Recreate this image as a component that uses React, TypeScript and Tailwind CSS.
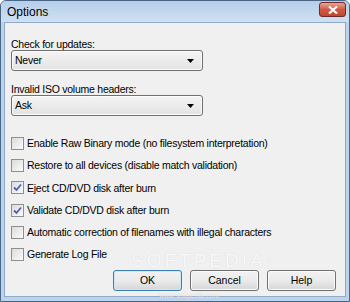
import React from "react";

const font = { fontFamily: '"Liberation Sans", Arial, sans-serif' };

function Select({ value }: { value: string }) {
  return (
    <div className="h-[21px] w-[192px] rounded-[3px] border border-[#707070] bg-gradient-to-b from-[#f4f4f4] to-[#e3e3e3] flex items-center pl-[3px] pr-[8px] text-[10.5px] tracking-[-0.25px] text-black shadow-[inset_0_0_0_1px_#fcfcfc]">
      <span className="flex-1">{value}</span>
      <svg width="7" height="4" viewBox="0 0 7 4">
        <path d="M0 0 H7 L3.5 4 Z" fill="#000" />
      </svg>
    </div>
  );
}

function Check({ label, checked }: { label: string; checked?: boolean }) {
  return (
    <div className="flex items-center h-[13px]">
      <div className="w-[13px] h-[13px] border border-[#8f8f8f] bg-gradient-to-br from-[#dcdcdc] to-[#fbfbfb] flex items-center justify-center shrink-0">
        {checked && (
          <svg width="9" height="9" viewBox="0 0 9 9">
            <path d="M1 4.5 L3.5 7 L8 1.5" stroke="#4a5fb8" strokeWidth="1.8" fill="none" />
          </svg>
        )}
      </div>
      <span className="ml-[3px] text-[10.5px] tracking-[-0.25px] text-black leading-none">{label}</span>
    </div>
  );
}

function Btn({ label, def }: { label: string; def?: boolean }) {
  return (
    <div
      className={`w-[69px] h-[21px] rounded-[3px] border flex items-center justify-center text-[10.5px] text-black bg-gradient-to-b from-[#f2f2f2] via-[#ebebeb] to-[#d6d6d6] ${
        def ? "border-[#3c7fb1] shadow-[inset_0_0_0_1px_#cbe8f6]" : "border-[#707070] shadow-[inset_0_0_0_1px_#fbfbfb]"
      }`}
    >
      {label}
    </div>
  );
}

export default function App() {
  return (
    <div style={font} className="relative w-[350px] h-[302px] bg-[#bcd3ec] border border-[#4a6686] rounded-t-[6px] flex flex-col overflow-hidden">
      <div className="h-[21px] shrink-0 bg-gradient-to-b from-[#b7cfea] to-[#cfe0f3] flex items-center pl-[6px] pr-[3px]">
        <span className="flex-1 text-[12px] text-black">Options</span>
        <div className="w-[27px] h-[15px] mt-[-4px] rounded-[3px] border border-[#6d2a2a] bg-gradient-to-b from-[#e8a593] via-[#cf5a44] to-[#c24530] flex items-center justify-center">
          <svg width="10" height="8" viewBox="0 0 10 8">
            <path d="M1 0.5 L9 7.5 M9 0.5 L1 7.5" stroke="#fff" strokeWidth="2.2" />
          </svg>
        </div>
      </div>
      <div className="flex-1 mx-[3px] mb-[4px] bg-[#f0f0f0] border border-[#8fa9c8] flex flex-col px-[6px] pt-[15px]">
        <div className="text-[10.5px] tracking-[-0.25px] text-black leading-[12px]">Check for updates:</div>
        <Select value="Never" />
        <div className="mt-[12px] text-[10.5px] tracking-[-0.25px] text-black leading-[12px]">Invalid ISO volume headers:</div>
        <Select value="Ask" />
        <div className="mt-[21px] flex flex-col gap-[9.2px]">
          <Check label="Enable Raw Binary mode (no filesystem interpretation)" />
          <Check label="Restore to all devices (disable match validation)" />
          <Check label="Eject CD/DVD disk after burn" checked />
          <Check label="Validate CD/DVD disk after burn" checked />
          <Check label="Automatic correction of filenames with illegal characters" />
          <Check label="Generate Log File" />
        </div>
        <div className="mt-[9.5px] flex justify-end gap-[8px] pr-[3px]">
          <Btn label="OK" def />
          <Btn label="Cancel" />
          <Btn label="Help" />
        </div>
      </div>
      <div className="absolute left-[130px] top-[250px] text-[19px] leading-[19px] tracking-[3px] text-white opacity-60 pointer-events-none [text-shadow:0_0_1px_#bbb]">
        SOFTPEDIA<sup className="text-[7px]">™</sup>
      </div>
      <div className="absolute left-[158px] top-[291px] text-[7px] leading-[8px] text-white opacity-70 pointer-events-none [text-shadow:0_0_1px_#999]">
        www.softpedia.com
      </div>
    </div>
  );
}
